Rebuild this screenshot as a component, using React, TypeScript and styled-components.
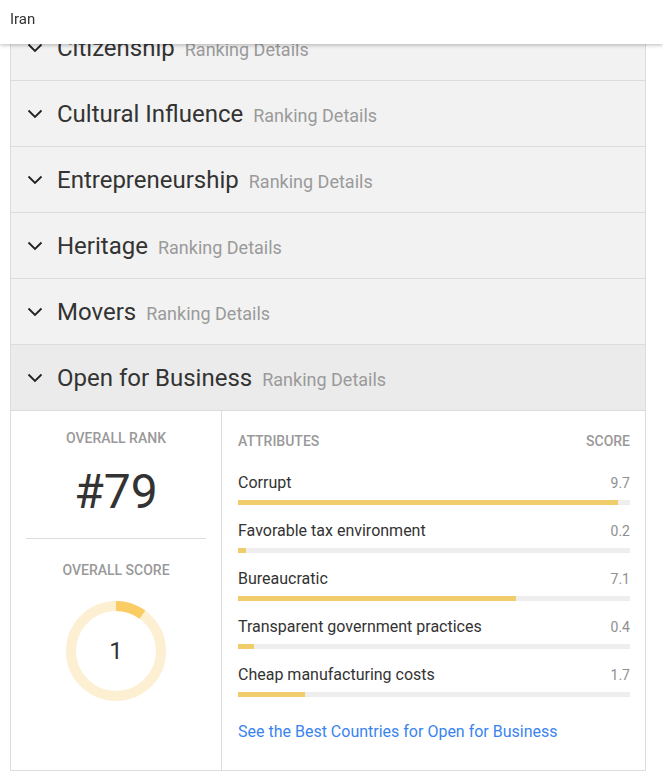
import React from "react";
import styled, { createGlobalStyle } from "styled-components";

const GlobalStyle = createGlobalStyle`
  html, body { margin: 0; padding: 0; background: #fff; }
  body { font-family: Roboto, "Noto Sans", Arial, sans-serif; color: #333; }
  * { box-sizing: border-box; }
`;

const TopBar = styled.header`
  position: fixed;
  top: 0;
  left: 0;
  right: 0;
  height: 44px;
  background: #fff;
  box-shadow: 0 1px 4px rgba(0, 0, 0, 0.28);
  display: flex;
  align-items: center;
  padding: 0 10px 6px;
  font-size: 15px;
  color: #333;
  z-index: 10;
`;

const Page = styled.main`
  padding: 15px 17px 0 10px;
`;

const Accordion = styled.section`
  border: 1px solid #dcdcdc;
  border-top: none;
`;

const Row = styled.div<{ $open?: boolean }>`
  height: 66px;
  display: flex;
  align-items: center;
  gap: 14px;
  padding-left: 16px;
  background: ${(p) => (p.$open ? "#ebebeb" : "#f2f2f2")};
  border-bottom: 1px solid #dcdcdc;
`;

const RowText = styled.div`
  display: flex;
  align-items: baseline;
  gap: 10px;
`;

const RowTitle = styled.span`
  font-size: 24px;
  color: #333;
`;

const RowSub = styled.span`
  font-size: 18px;
  color: #9a9a9a;
`;

const Panel = styled.div`
  display: grid;
  grid-template-columns: 211px 1fr;
  background: #fff;
`;

const RankCol = styled.div`
  border-right: 1px solid #dcdcdc;
  display: flex;
  flex-direction: column;
  align-items: center;
  padding: 19px 15px 0;
`;

const Label = styled.div`
  font-size: 14px;
  line-height: 16px;
  font-weight: 500;
  color: #999;
  text-transform: uppercase;
`;

const BigRank = styled.div`
  font-size: 48px;
  line-height: 56px;
  margin-top: 18px;
  color: #333;
`;

const Divider = styled.hr`
  align-self: stretch;
  border: none;
  border-top: 1px solid #dcdcdc;
  margin: 18px 0 23px;
`;

const DonutWrap = styled.div`
  position: relative;
  width: 100px;
  height: 100px;
  margin-top: 23px;
`;

const DonutValue = styled.div`
  position: absolute;
  inset: 0;
  display: flex;
  align-items: center;
  justify-content: center;
  font-size: 24px;
  color: #333;
`;

const AttrCol = styled.div`
  padding: 22px 15px 28px 16px;
  display: flex;
  flex-direction: column;
`;

const HeadRow = styled.div`
  display: flex;
  justify-content: space-between;
  margin-bottom: 24px;
`;

const Attr = styled.div`
  margin-bottom: 16px;
`;

const AttrLine = styled.div`
  display: flex;
  justify-content: space-between;
  align-items: baseline;
  line-height: 20px;
`;

const AttrName = styled.span`
  font-size: 16px;
  color: #333;
`;

const AttrScore = styled.span`
  font-size: 14px;
  font-weight: 400;
  color: #8f8f8f;
`;

const Track = styled.div`
  height: 5px;
  margin-top: 7px;
  background: #eeeeee;
`;

const Fill = styled.div`
  height: 100%;
  background: #f0cd6a;
`;

const MoreLink = styled.a`
  margin-top: 9px;
  font-size: 16px;
  line-height: 20px;
  color: #3a84f0;
  text-decoration: none;
`;

const Chevron = () => (
  <svg width="16" height="10" viewBox="0 0 16 10" fill="none">
    <polyline points="1.5,1.5 8,8 14.5,1.5" stroke="#222" strokeWidth="1.8" />
  </svg>
);

const Donut = ({ value }: { value: number }) => {
  const r = 45;
  const c = 2 * Math.PI * r;
  return (
    <svg width="100" height="100" viewBox="0 0 100 100">
      <circle cx="50" cy="50" r={r} fill="none" stroke="#fdefd2" strokeWidth="10" />
      <circle
        cx="50"
        cy="50"
        r={r}
        fill="none"
        stroke="#f9cd63"
        strokeWidth="10"
        strokeDasharray={`${(c * value) / 10} ${c}`}
        transform="rotate(-90 50 50)"
      />
    </svg>
  );
};

const categories = ["Citizenship", "Cultural Influence", "Entrepreneurship", "Heritage", "Movers"];

const attributes = [
  { name: "Corrupt", score: 9.7 },
  { name: "Favorable tax environment", score: 0.2 },
  { name: "Bureaucratic", score: 7.1 },
  { name: "Transparent government practices", score: 0.4 },
  { name: "Cheap manufacturing costs", score: 1.7 },
];

export default function App() {
  return (
    <>
      <GlobalStyle />
      <TopBar>Iran</TopBar>
      <Page>
        <Accordion>
          {categories.map((c) => (
            <Row key={c}>
              <Chevron />
              <RowText>
                <RowTitle>{c}</RowTitle>
                <RowSub>Ranking Details</RowSub>
              </RowText>
            </Row>
          ))}
          <Row $open>
            <Chevron />
            <RowText>
              <RowTitle>Open for Business</RowTitle>
              <RowSub>Ranking Details</RowSub>
            </RowText>
          </Row>
          <Panel>
            <RankCol>
              <Label>Overall Rank</Label>
              <BigRank>#79</BigRank>
              <Divider />
              <Label>Overall Score</Label>
              <DonutWrap>
                <Donut value={1} />
                <DonutValue>1</DonutValue>
              </DonutWrap>
            </RankCol>
            <AttrCol>
              <HeadRow>
                <Label>Attributes</Label>
                <Label>Score</Label>
              </HeadRow>
              {attributes.map((a) => (
                <Attr key={a.name}>
                  <AttrLine>
                    <AttrName>{a.name}</AttrName>
                    <AttrScore>{a.score.toFixed(1)}</AttrScore>
                  </AttrLine>
                  <Track>
                    <Fill style={{ width: `${a.score * 10}%` }} />
                  </Track>
                </Attr>
              ))}
              <MoreLink href="#">See the Best Countries for Open for Business</MoreLink>
            </AttrCol>
          </Panel>
        </Accordion>
      </Page>
    </>
  );
}
